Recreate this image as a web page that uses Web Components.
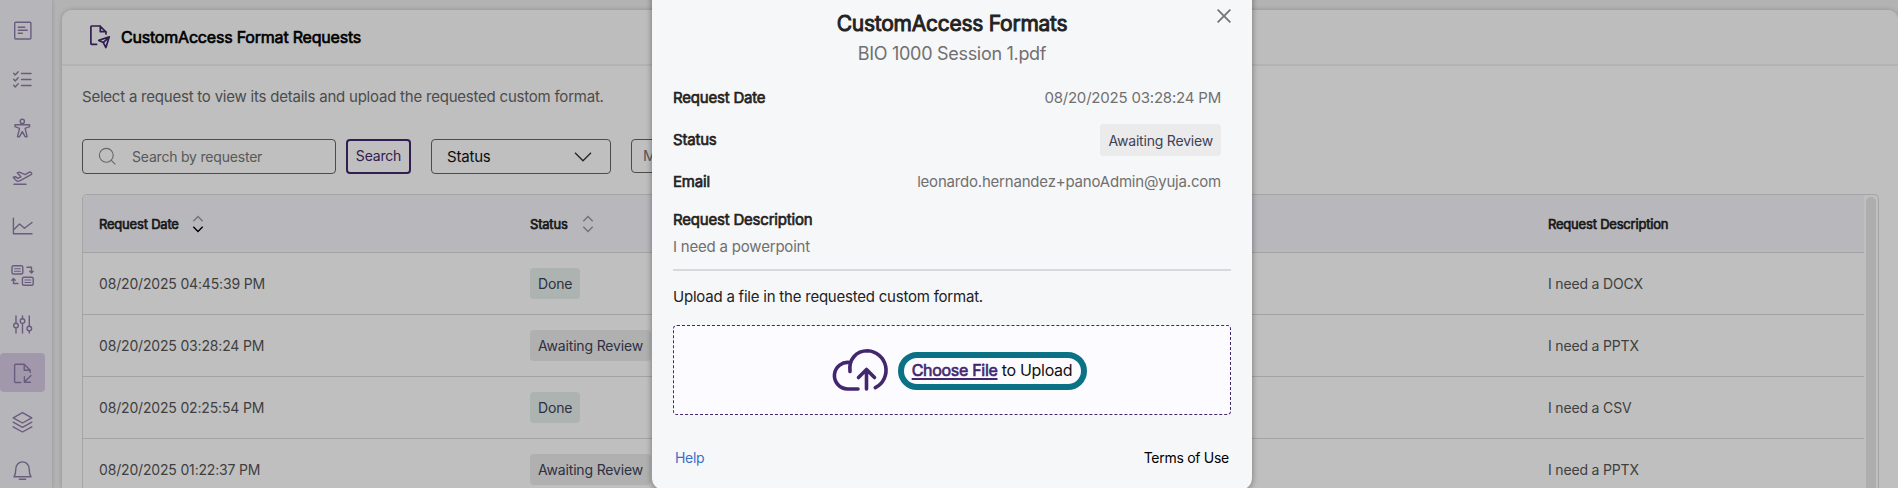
<!DOCTYPE html>
<html lang="en">
<head>
<meta charset="utf-8">
<title>CustomAccess Format Requests</title>
<style>
    body {
        margin: 0;
        height: 488px;
        overflow: hidden;
        background: #efefef;
        font-family: Inter, "Liberation Sans", sans-serif;
        font-size: 15px;
        letter-spacing: -0.2px;
        color: #222;
    }
    .layout { display: flex; height: 488px; overflow: hidden; }
</style>
</head>
<body>
<div class="layout">
    <side-nav active="requests"></side-nav>
    <request-panel heading="CustomAccess Format Requests">
        <request-table>
            <request-row date="08/20/2025 04:45:39 PM" status="Done">I need a DOCX</request-row>
            <request-row date="08/20/2025 03:28:24 PM" status="Awaiting Review">I need a PPTX</request-row>
            <request-row date="08/20/2025 02:25:54 PM" status="Done">I need a CSV</request-row>
            <request-row date="08/20/2025 01:22:37 PM" status="Awaiting Review">I need a PPTX</request-row>
        </request-table>
    </request-panel>
</div>
<modal-dialog heading="CustomAccess Formats" file="BIO 1000 Session 1.pdf">
    <detail-row label="Request Date">08/20/2025 03:28:24 PM</detail-row>
    <detail-row label="Status"><status-badge modal>Awaiting Review</status-badge></detail-row>
    <detail-row label="Email">leonardo.hernandez+panoAdmin@yuja.com</detail-row>
    <detail-row label="Request Description" stacked>I need a powerpoint</detail-row>
    <upload-box slot="upload"></upload-box>
</modal-dialog>

<script>
const NAV_ICONS = {
    document: '<rect x="7.7" y="7.2" width="16.2" height="16.8" rx="1"/><path d="M11.3 12.2h6.5M11.3 15.3h9M11.3 18.3h4"/>',
    checklist: '<path d="M6.7 9.3l1.5 1.7 3-3.2M6.7 15.3l1.5 1.7 3-3.2M6.7 21.3l1.5 1.7 3-3.2M14.5 9.5h9.5M14.5 15.5h9.5M14.5 21.5h9.5"/>',
    person: '<circle cx="15.3" cy="8.4" r="2.1"/><path d="M8 11.7h14.6v2l-4.5 1.6 2 8.4h-2l-2.8-5-2.8 5h-2l2-8.4-4.5-1.6z"/>',
    plane: '<path d="M6.3 15.3l2.2-.6 2.4 1.6 3-1.5-3.7-4 2-.6 6 2.4 3.8-2.3c1.5-.8 3.3.7 2.6 1.8-.4.6-2 1.5-3.2 2.1l-8.7 4.7c-2 .7-3.3.3-4.2-1zM7 22.2h12"/>',
    chart: '<path d="M6.4 7.3v15.4H25M7.4 18l5.2-5 4.8 4.3L25 11.5"/>',
    convert: '<rect x="5" y="5.7" width="10.8" height="8.3" rx="1.5"/><path stroke-width="1.1" d="M7.5 8.7h5.8M7.5 11.2h5.8M17.8 20h6M17.8 22.5h6"/><path d="M20 7.3h4.5v5M22.8 11.2l1.7 1.8 1.7-1.8M11 23.5H6.5v-4.8M4.8 20.2l1.7-1.7 1.7 1.7"/><rect x="15.4" y="17.2" width="10.8" height="8" rx="1.5"/>',
    sliders: '<path d="M9 7v7M9 19v5M15.5 7v2.6M15.5 14.6V24M22.3 7v10M22.3 22v2"/><circle cx="9" cy="16.5" r="2.3"/><circle cx="15.5" cy="12.1" r="2.3"/><circle cx="22.3" cy="19.5" r="2.3"/>',
    requests: '<path d="M13.8 24.5H8.6a1 1 0 0 1-1-1V7.3a1 1 0 0 1 1-1h8.6l6 6v2.2M17.2 6.6v5.7h5.8M24 17.5l-6.3 6.3M17.4 18.8v5.5h6"/>',
    layers: '<path d="M15.5 5.6l9.3 5.2-9.3 5.2-9.3-5.2zM6.2 15.2l9.3 5.2 9.3-5.2M6.2 19.8l9.3 5.2 9.3-5.2"/>',
    bell: '<path d="M7 21.8c1.5-2.2 1.8-4 1.8-7.5 0-4.3 2.8-7.4 6.7-7.4s6.7 3.1 6.7 7.4c0 3.5.3 5.3 1.8 7.5zM12.3 24.3h6.4"/>'
};

const BOLD = 'font-weight: 400; -webkit-text-stroke: 0.65px currentColor;';

class SideNav extends HTMLElement {
    constructor() {
        super();
        this.attachShadow({ mode: 'open' });
    }

    connectedCallback() {
        const active = this.getAttribute('active');
        this.shadowRoot.innerHTML = `
            <style>
                :host {
                    display: flex;
                    box-sizing: border-box;
                    flex-direction: column;
                    gap: 10px;
                    flex: none;
                    width: 52px;
                    height: 488px;
                    padding-top: 10px;
                    background: #f3f2f8;
                    box-shadow: 0 0 4px rgba(0,0,0,0.2);
                }
                a {
                    display: flex;
                    flex: none;
                    align-items: center;
                    width: 45px;
                    height: 39px;
                }
                a:last-child { height: 38px; }
                a.active { background: #d9cbe6; border-radius: 4px; }
                svg { margin: 1px 0 0 6.5px; }
            </style>
            ${Object.keys(NAV_ICONS).map(name => `
                <a class="${name === active ? 'active' : ''}">
                    <svg width="31" height="31" viewBox="0 0 31 31" fill="none" stroke="#8d7ba8" stroke-width="1.4" stroke-linecap="round" stroke-linejoin="round">${NAV_ICONS[name]}</svg>
                </a>`).join('')}
        `;
    }
}

class RequestPanel extends HTMLElement {
    constructor() {
        super();
        this.attachShadow({ mode: 'open' });
    }

    connectedCallback() {
        this.shadowRoot.innerHTML = `
            <style>
                :host {
                    display: block;
                    box-sizing: border-box;
                    flex: 1;
                    height: 478px;
                    margin: 10px 0 0 10px;
                    border-radius: 10px 10px 0 0;
                    background: #fff;
                    box-shadow: 0 0 5px rgba(0,0,0,0.2);
                }
                header {
                    display: flex;
                    align-items: center;
                    height: 54px;
                    padding-left: 27px;
                    gap: 10px;
                    border-bottom: 2px solid #efefef;
                    border-radius: 10px 10px 0 0;
                    background: #fcfcfc;
                }
                h1 { margin: 0; font-size: 16px; line-height: 20px; color: #000; ${BOLD} }
                p { margin: 20px 0 31px; line-height: 22px; letter-spacing: -0.22px; color: #666; }
                main { padding: 0 19px 0 20px; }
                .filters { display: flex; height: 35px; margin-bottom: 20px; }
                .filters > * { box-sizing: border-box; display: flex; align-items: center; border: 1px solid #666; border-radius: 4px; }
                .search { width: 254px; padding-left: 15px; gap: 15px; font-size: 14px; color: #777; }
                .button { width: 65px; margin: 0 20px 0 10px; padding: 0 0 2px; justify-content: center; border: 2px solid #43276e; font-size: 14px; color: #43276e; }
                .status { width: 180px; padding: 0 18px 0 15px; justify-content: space-between; color: #111; }
                .more { width: 180px; height: 34px; margin-left: 20px; padding: 0 0 2px 11px; color: #777; }
            </style>
            <header>
                <svg width="22" height="24" viewBox="0 0 22 24" fill="none" stroke="#43276e" stroke-width="1.7" stroke-linejoin="round" stroke-linecap="round">
                    <path d="M7.6 19.3H2.7a.8.8 0 0 1-.8-.8V1.8A.8.8 0 0 1 2.7 1H11l6 6v2M11.3 1v5.7H17"/>
                    <path d="M20.3 11.8L9.8 15.4l4.5 2.2 2.6 5zM20.3 11.8l-6 5.8"/>
                </svg>
                <h1>${this.getAttribute('heading')}</h1>
            </header>
            <main>
                <p>Select a request to view its details and upload the requested custom format.</p>
                <div class="filters">
                    <div class="search">
                        <svg width="19" height="19" viewBox="0 0 19 19" fill="none" stroke="#888" stroke-width="1.1"><circle cx="8.3" cy="8.3" r="6.9"/><path d="M13.3 13.3l4 4"/></svg>
                        <span>Search by requester</span>
                    </div>
                    <div class="button">Search</div>
                    <div class="status">
                        <span>Status</span>
                        <svg width="18" height="10" viewBox="0 0 18 10" fill="none" stroke="#333" stroke-width="1.4"><path d="M1 .7l8 8 8-8"/></svg>
                    </div>
                    <div class="more">M</div>
                </div>
                <slot></slot>
            </main>
        `;
    }
}

class RequestTable extends HTMLElement {
    constructor() {
        super();
        this.attachShadow({ mode: 'open' });
        const arrows = (up, down) => `
            <svg width="12" height="18" viewBox="0 0 12 18" fill="none" stroke-width="1.4">
                <path d="M1.3 6.3L6 1.6l4.7 4.7" stroke="${up}"/><path d="M1.3 11.7L6 16.4l4.7-4.7" stroke="${down}"/>
            </svg>`;
        this.shadowRoot.innerHTML = `
            <style>
                :host {
                    display: flex;
                    box-sizing: border-box;
                    height: 294px;
                    border: 1px solid #ddd;
                    border-bottom: 0;
                    border-radius: 5px 5px 0 0;
                    overflow: hidden;
                }
                .body { flex: 1; }
                .head {
                    display: grid;
                    grid-template-columns: 431px 1018px 1fr;
                    align-items: center;
                    height: 57px;
                    padding-left: 16px;
                    border-bottom: 1px solid #dadada;
                    background: #f6f5fb;
                    color: #222;
                    font-size: 13px;
                }
                .head span { display: flex; align-items: center; gap: 13px; ${BOLD} }
                .head span:nth-child(2) { gap: 14px; }
                .bar { width: 10px; margin: 2px 2px 0; border-radius: 5px 5px 0 0; background: #e8e8e8; }
            </style>
            <div class="body">
                <div class="head">
                    <span>Request Date ${arrows('#999', '#000')}</span>
                    <span>Status ${arrows('#999', '#999')}</span>
                    <span>Request Description</span>
                </div>
                <slot></slot>
            </div>
            <div class="bar"></div>
        `;
    }
}

class RequestRow extends HTMLElement {
    constructor() {
        super();
        this.attachShadow({ mode: 'open' });
    }

    connectedCallback() {
        const status = this.getAttribute('status');
        this.shadowRoot.innerHTML = `
            <style>
                :host {
                    display: grid;
                    grid-template-columns: 431px 1018px 1fr;
                    align-items: center;
                    height: 61px;
                    padding-left: 16px;
                    border-bottom: 1px solid #dadada;
                    color: #555;
                    font-size: 14px;
                    letter-spacing: -0.17px;
                }
            </style>
            <span>${this.getAttribute('date')}</span>
            <span><status-badge ${status === 'Done' ? 'done' : ''}>${status}</status-badge></span>
            <span><slot></slot></span>
        `;
    }
}

class StatusBadge extends HTMLElement {
    constructor() {
        super();
        this.attachShadow({ mode: 'open' });
        this.shadowRoot.innerHTML = `
            <style>
                :host {
                    display: block;
                    width: max-content;
                    padding: 0 8px;
                    border-radius: 4px;
                    background: #ebebeb;
                    color: #3c4257;
                    font-size: 14px;
                    line-height: 31px;
                }
                :host([done]) { background: #e6efed; }
                :host([modal]) { margin-top: 2px; padding-top: 1px; }
            </style>
            <slot></slot>
        `;
    }
}

class DetailRow extends HTMLElement {
    constructor() {
        super();
        this.attachShadow({ mode: 'open' });
    }

    connectedCallback() {
        this.shadowRoot.innerHTML = `
            <style>
                :host {
                    display: flex;
                    align-items: center;
                    justify-content: space-between;
                    height: 42px;
                    padding-right: 10px;
                    color: #707070;
                }
                :host([stacked]) { display: block; height: 56px; padding-top: 4px; line-height: 27px; }
                .label { display: block; color: #222; ${BOLD} }
            </style>
            <span class="label">${this.getAttribute('label')}</span>
            <slot></slot>
        `;
    }
}

class UploadBox extends HTMLElement {
    constructor() {
        super();
        this.attachShadow({ mode: 'open' });
        this.shadowRoot.innerHTML = `
            <style>
                :host {
                    display: flex;
                    box-sizing: border-box;
                    align-items: center;
                    justify-content: center;
                    gap: 8px;
                    height: 90px;
                    padding-left: 15px;
                    border: 1px dashed #43276e;
                    border-radius: 4px;
                    background: #fcfbff;
                    color: #111;
                    font-size: 16px;
                    letter-spacing: -0.3px;
                }
                .pill {
                    box-sizing: border-box;
                    width: 189px;
                    height: 38px;
                    margin-top: 2px;
                    padding-right: 1px;
                    border: 6px solid #0b7285;
                    border-radius: 19px;
                    line-height: 25px;
                    text-align: center;
                    white-space: nowrap;
                }
                b { color: #43276e; text-decoration: underline 1.5px; text-decoration-skip-ink: none; text-underline-offset: 2px; ${BOLD} }
            </style>
            <svg width="58" height="44" viewBox="0 0 58 44" fill="none" stroke="#43276e" stroke-width="3.6" stroke-linecap="round" stroke-linejoin="round">
                <path d="M26 41H15.5A13.3 13.3 0 1 1 18 14.6M18 23.5C16.5 11 24.5 2.8 35.5 2.8a19.5 19.5 0 0 1 7.8 36.9"/>
                <path d="M34.5 41V22M26.5 29.5l8-8 8 8"/>
            </svg>
            <div class="pill"><b>Choose File</b> to Upload</div>
        `;
    }
}

class ModalDialog extends HTMLElement {
    constructor() {
        super();
        this.attachShadow({ mode: 'open' });
    }

    connectedCallback() {
        this.shadowRoot.innerHTML = `
            <style>
                /* backdrop covers the page behind the dialog */
                :host {
                    position: absolute;
                    inset: 0;
                    display: flex;
                    justify-content: center;
                    align-items: flex-start;
                    padding-left: 6px;
                    overflow: hidden;
                    background: rgba(0,0,0,0.25);
                }
                .dialog {
                    position: relative;
                    box-sizing: border-box;
                    width: 600px;
                    height: 510px;
                    margin-top: -20px;
                    padding: 31px 21px 0;
                    border-radius: 12px;
                    background: #f6f7f9;
                    box-shadow: 0 1px 6px rgba(0,0,0,0.4);
                }
                .close { position: absolute; top: 29px; right: 21px; }
                h2 { margin: 0; font-size: 21px; line-height: 26px; text-align: center; letter-spacing: -0.25px; ${BOLD} -webkit-text-stroke-width: 0.9px; }
                h3 { margin: 0 0 6px; font-size: 18px; font-weight: 400; line-height: 33px; letter-spacing: -0.3px; text-align: center; color: #707070; }
                .details { padding-bottom: 7px; border-bottom: 2px solid #d8d9dc; }
                p { margin: 14px 0 17px; line-height: 23px; letter-spacing: -0.22px; }
                footer { display: flex; justify-content: space-between; padding: 33px 2px 0; font-size: 14px; line-height: 20px; letter-spacing: -0.28px; color: #000; }
                footer a:first-child { color: #3872cc; }
            </style>
            <div class="dialog">
                <svg class="close" width="14" height="14" viewBox="0 0 14 14" stroke="#777" stroke-width="1.9"><path d="M.6.6l12.8 12.8M13.4.6L.6 13.4"/></svg>
                <h2>${this.getAttribute('heading')}</h2>
                <h3>${this.getAttribute('file')}</h3>
                <div class="details"><slot></slot></div>
                <p>Upload a file in the requested custom format.</p>
                <slot name="upload"></slot>
                <footer><a>Help</a><a>Terms of Use</a></footer>
            </div>
        `;
    }
}

customElements.define('side-nav', SideNav);
customElements.define('request-panel', RequestPanel);
customElements.define('request-table', RequestTable);
customElements.define('request-row', RequestRow);
customElements.define('status-badge', StatusBadge);
customElements.define('detail-row', DetailRow);
customElements.define('upload-box', UploadBox);
customElements.define('modal-dialog', ModalDialog);
</script>
</body>
</html>
